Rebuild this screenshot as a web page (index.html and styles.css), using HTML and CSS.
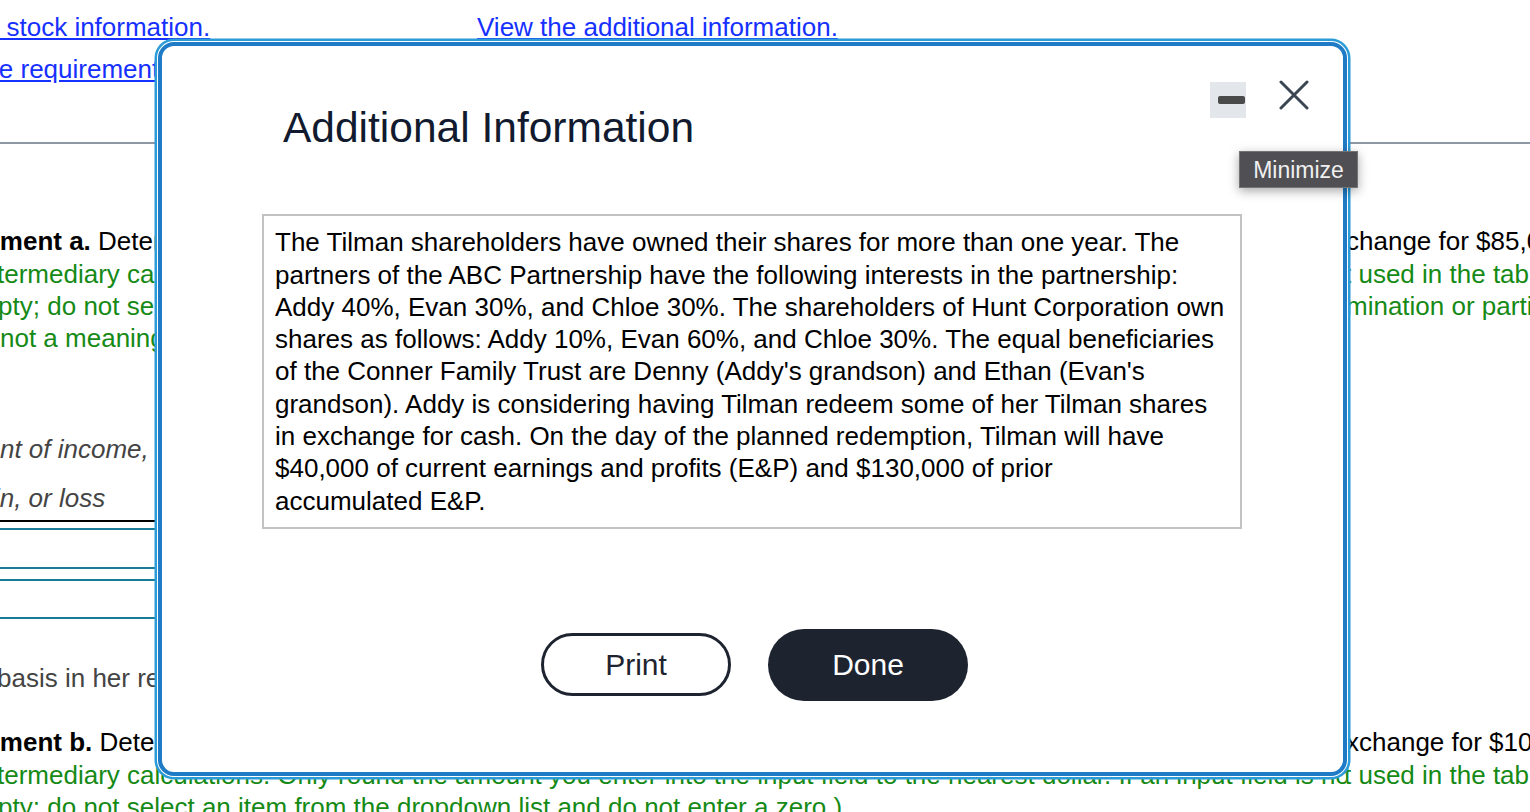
FILE: index.html
```html
<!DOCTYPE html>
<html lang="en">
<head>
<meta charset="utf-8">
<title>Additional Information</title>
<link rel="stylesheet" href="styles.css">
</head>
<body>
<div class="page">
  <div class="links">
    <div class="link-row">
      <a class="lnk ind-stock" href="#">View the stock information.</a>
      <a class="lnk" href="#">View the additional information.</a>
    </div>
    <div class="link-row">
      <a class="lnk ind-req-link" href="#">View the requirements.</a>
    </div>
  </div>
  <div class="rule"></div>

  <div class="sec sec-a">
    <div class="row"><span class="l ind-req"><b>Requirement a.</b> Determine the tax consequences to Addy if Tilman redeems 100 of her shares in ex</span><span class="r">change for $85,000.</span></div>
    <div class="row green"><span class="l ind-3">termediary calculations. Only round the amount you enter into the input field to the nearest dollar. If an input field is no</span><span class="r ind-r2">t used in the table leave the input field empty</span></div>
    <div class="row green"><span class="l ind-em">empty; do not select a label or enter a zero. If the redemption qualifies as a sale or exchange, a complete ter</span><span class="r">mination or partial liquidation</span></div>
    <div class="row green"><span class="l">not a meaningful answer, leave the input field empty.)</span><span class="r"></span></div>
  </div>

  <div class="thead">
    <div class="row it"><span class="l ind-amou">Amount of income,</span><span class="r"></span></div>
    <div class="row it row-gap"><span class="l ind-gai">gain, or loss</span><span class="r"></span></div>
  </div>
  <div class="tline-black"></div>
  <div class="trow h6"></div>
  <div class="trow h37"></div>
  <div class="trow h10"></div>
  <div class="trow h36"></div>

  <div class="row basis"><span class="l ind-3">basis in her remaining shares</span><span class="r"></span></div>

  <div class="sec sec-b">
    <div class="row"><span class="l ind-req"><b>Requirement b.</b> Determine the tax consequences to Addy if Tilman redeems 200 of her shares in e</span><span class="r">xchange for $100,000.</span></div>
    <div class="row green"><span class="l ind-3">termediary calculations. Only round the amount you enter into the input field to the nearest dollar. If an input field is no</span><span class="r ind-r2">t used in the table leave the input field empty</span></div>
    <div class="row green"><span class="l ind-em">empty; do not select an item from the dropdown list and do not enter a zero.)</span><span class="r"></span></div>
  </div>
</div>

<div class="modal" role="dialog" aria-label="Additional Information">
  <div class="modal-head">
    <h2 class="modal-title">Additional Information</h2>
    <div class="controls">
      <button class="btn-min" aria-label="Minimize"><span class="min-bar"></span></button>
      <button class="btn-close" aria-label="Close">
        <svg width="30" height="30" viewBox="0 0 30 30"><path d="M2 2 L28 28 M28 2 L2 28" stroke="#3b4652" stroke-width="3" stroke-linecap="round" fill="none"/></svg>
      </button>
    </div>
  </div>
  <div class="info-box">The Tilman shareholders have owned their shares for more than one year. The partners of the ABC Partnership have the following interests in the partnership: Addy 40%, Evan 30%, and Chloe 30%. The shareholders of Hunt Corporation own shares as follows: Addy 10%, Evan 60%, and Chloe 30%. The equal beneficiaries of the Conner Family Trust are Denny (Addy's grandson) and Ethan (Evan's grandson). Addy is considering having Tilman redeem some of her Tilman shares in exchange for cash. On the day of the planned redemption, Tilman will have $40,000 of current earnings and profits (E&amp;P) and $130,000 of prior<br>accumulated E&amp;P.</div>
  <div class="actions">
    <button class="btn btn-print">Print</button>
    <button class="btn btn-done">Done</button>
  </div>
</div>

<div class="tooltip">Minimize</div>
</body>
</html>
```

FILE: styles.css
```css
html, body {
  margin: 0;
  padding: 0;
}
body {
  width: 1530px;
  height: 812px;
  overflow: hidden;
  position: relative;
  background: #ffffff;
  font-family: "Liberation Sans", Arial, Helvetica, sans-serif;
  font-size: 26px;
  line-height: 32.3px;
  color: #000000;
}

/* ---------- background page ---------- */
.links {
  padding-top: 11px;
}
.link-row {
  display: grid;
  grid-template-columns: 477px auto;
  white-space: nowrap;
}
.link-row + .link-row {
  margin-top: 10px;
}
.lnk {
  color: #1530ff;
  text-decoration: underline;
}
.ind-stock { margin-left: -100px; }
.ind-req-link { margin-left: -86px; }

.rule {
  margin-top: 56.4px;
  height: 2px;
  background: #8e97a4;
}

.sec-a { margin-top: 81.3px; }
.sec-b { margin-top: 32px; }

.row {
  display: grid;
  grid-template-columns: 1346px 1fr;
  white-space: nowrap;
  height: 32.3px;
}
.row > span {
  display: block;
  overflow: hidden;
}
.green { color: #168a16; }

.ind-req { text-indent: -97px; }
.ind-3 { text-indent: -3px; }
.ind-em { text-indent: -38px; }
.ind-amou { text-indent: -68px; }
.ind-gai { text-indent: -35px; }
.ind-r2 { text-indent: -2px; }

.thead { margin-top: 78.8px; }
.it {
  font-style: italic;
  color: #444444;
}
.row-gap { margin-top: 16.4px; }

.tline-black {
  margin-top: 5.7px;
  width: 1000px;
  height: 2px;
  background: #000000;
}
.trow {
  width: 1000px;
  border-bottom: 2px solid #1b7a98;
}
.h6 { height: 6px; }
.h37 { height: 37px; }
.h10 { height: 10px; }
.h36 { height: 36px; }

.basis {
  margin-top: 43px;
  color: #444444;
}

/* ---------- modal ---------- */
.modal {
  position: absolute;
  left: 158px;
  top: 42px;
  width: 1189px;
  height: 734px;
  box-sizing: border-box;
  border: 4px solid #1f7bc6;
  border-radius: 16px;
  background: #ffffff;
  box-shadow: 0 0 0 1px #ffffff, 0 0 0 3.5px #2b9cd8;
  display: flex;
  flex-direction: column;
}
.modal-head {
  display: flex;
  justify-content: space-between;
  align-items: flex-start;
  padding: 34px 34px 0 121px;
}
.modal-title {
  margin: 23px 0 0 0;
  font-family: "Liberation Sans", Helvetica, Arial, sans-serif;
  font-weight: normal;
  font-size: 42.5px;
  line-height: 50px;
  color: #111a2e;
}
.controls {
  display: flex;
  align-items: flex-start;
  gap: 33px;
}
.btn-min {
  margin-top: 2px;
  width: 36px;
  height: 36px;
  padding: 0;
  border: 0;
  background: #e3e6ea;
  display: flex;
  align-items: center;
  justify-content: center;
}
.min-bar {
  display: block;
  width: 27px;
  height: 8px;
  border-radius: 2px;
  background: #4a4a4a;
  margin-left: 6px;
}
.btn-close {
  width: 30px;
  height: 30px;
  padding: 0;
  border: 0;
  background: transparent;
  display: block;
}
.btn-close svg { display: block; }

.info-box {
  margin: 61px 0 0 100px;
  width: 980px;
  box-sizing: border-box;
  border: 2px solid #c2c2c2;
  padding: 10.3px 11px 10px 11px;
  font-family: "Liberation Sans", Arial, sans-serif;
  font-size: 26px;
  line-height: 32.3px;
  color: #000000;
}

.actions {
  margin-top: 100px;
  display: flex;
  justify-content: center;
  align-items: center;
  gap: 37px;
  padding-left: 4px;
}
.btn {
  font-family: "Liberation Sans", Helvetica, Arial, sans-serif;
  font-size: 30px;
  box-sizing: border-box;
  padding: 0;
}
.btn-print {
  width: 190px;
  height: 63px;
  border: 3px solid #1e2330;
  border-radius: 32px;
  background: #ffffff;
  color: #1e2330;
}
.btn-done {
  width: 200px;
  height: 72px;
  border: 0;
  border-radius: 36px;
  background: #1e2330;
  color: #ffffff;
}

/* ---------- tooltip ---------- */
.tooltip {
  position: absolute;
  left: 1239px;
  top: 151px;
  width: 119px;
  height: 37px;
  box-sizing: border-box;
  padding-top: 1px;
  border: 1px solid #737373;
  background: #4f4f54;
  color: #efefef;
  font-family: "Liberation Sans", Arial, sans-serif;
  font-size: 23px;
  line-height: 34px;
  text-align: center;
  box-shadow: 0 3px 10px rgba(0, 0, 0, 0.35);
}
```
